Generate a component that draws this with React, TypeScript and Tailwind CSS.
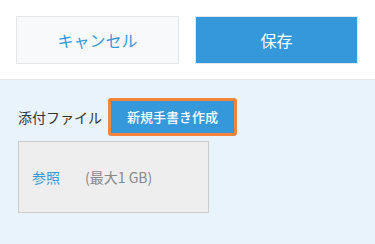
export default function App() {
  const font = { fontFamily: '"Noto Sans CJK JP", "Noto Sans", sans-serif' };
  return (
    <div className="w-[375px] h-[244px] bg-white flex flex-col" style={font}>
      <div className="flex gap-4 px-4 pt-4 pb-4 h-[80px] border-b border-[#e3e7e8]">
        <button className="w-[163px] h-[48px] bg-[#f7f9fa] border border-[#e3e7e8] text-[#3498db] text-[16px]">
          キャンセル
        </button>
        <button className="w-[163px] h-[48px] bg-[#3498db] border border-[#e3e7e8] text-white text-[16px]">
          保存
        </button>
      </div>
      <div className="flex-1 bg-[#e9f3fb] px-[18px] pt-[18px]">
        <div className="flex items-center gap-[6px] h-[38px]">
          <span className="text-[14px] text-[#333333]">添付ファイル</span>
          <div className="rounded-[3px] border-[3px] border-[#f5833c]">
            <button className="w-[123px] h-[32px] bg-[#3498db] text-white text-[13px] font-medium flex items-center justify-center">
              新規手書き作成
            </button>
          </div>
        </div>
        <div className="mt-[5px] w-[191px] h-[72px] bg-[#eeeeee] border border-[#cccccc] flex items-center pl-[13px]">
          <span className="text-[14px] text-[#3498db]">参照</span>
          <span className="ml-[25px] text-[14px] text-[#888888]">(最大1 GB)</span>
        </div>
      </div>
    </div>
  );
}
